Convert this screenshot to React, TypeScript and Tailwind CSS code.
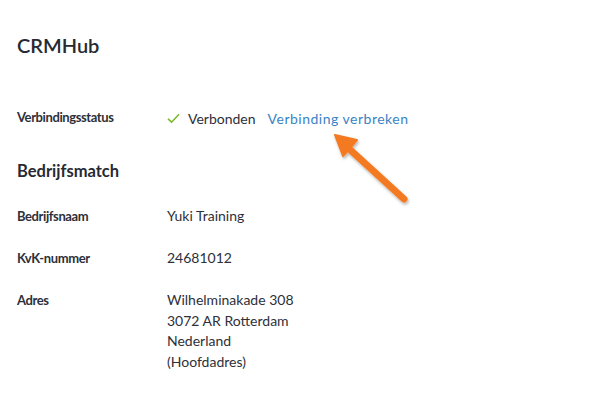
import React from "react";

export default function App() {
  const label = "text-[13px] font-bold tracking-[-0.4px] text-[#2d3039] w-[150px] shrink-0";
  const value = "text-[14px] text-[#2d3039]";
  return (
    <div className="relative w-[598px] h-[402px] bg-white" style={{ fontFamily: "Lato, 'Open Sans', sans-serif" }}>
      <div className="pl-[17px] pt-[33px]">
        <h1 className="text-[20px] font-semibold text-[#262a33] leading-[24px]">CRMHub</h1>
        <div className="flex items-center mt-[49px] h-[24px]">
          <div className={label}>Verbindingsstatus</div>
          <div className="flex items-center">
            <svg width="13" height="11" viewBox="0 0 13 11" className="mr-[8px]">
              <path d="M1 5.8 L4.6 9.2 L12 1.2" fill="none" stroke="#7cb82f" strokeWidth="1.6" />
            </svg>
            <span className={value}>Verbonden</span>
            <span className="text-[14px] tracking-[0.5px] text-[#3a83c5] ml-[12px]">Verbinding verbreken</span>
          </div>
        </div>
        <h2 className="text-[16.5px] font-bold text-[#262a33] mt-[31px] leading-[20px]">Bedrijfsmatch</h2>
        <div className="flex items-center mt-[25px] leading-[20px]">
          <div className={label}>Bedrijfsnaam</div>
          <div className={value}>Yuki Training</div>
        </div>
        <div className="flex items-center mt-[22px] leading-[20px]">
          <div className={label}>KvK-nummer</div>
          <div className={value}>24681012</div>
        </div>
        <div className="flex mt-[22px] leading-[20px]">
          <div className={label + " leading-[20px]"}>Adres</div>
          <div className={value + " leading-[20.5px]"}>
            <div>Wilhelminakade 308</div>
            <div>3072 AR Rotterdam</div>
            <div>Nederland</div>
            <div>(Hoofdadres)</div>
          </div>
        </div>
      </div>
      <svg className="absolute left-0 top-0 pointer-events-none" width="598" height="402">
        <defs>
          <filter id="sh" x="-20%" y="-20%" width="140%" height="140%">
            <feDropShadow dx="1" dy="2" stdDeviation="1.5" floodColor="#000" floodOpacity="0.3" />
          </filter>
        </defs>
        <g filter="url(#sh)">
          <line x1="404" y1="199" x2="346" y2="146" stroke="#f47a22" strokeWidth="7" strokeLinecap="round" />
          <polygon points="335,135 357,140 343,156" fill="#f47a22" stroke="#f47a22" strokeWidth="2" strokeLinejoin="round" />
        </g>
      </svg>
    </div>
  );
}
